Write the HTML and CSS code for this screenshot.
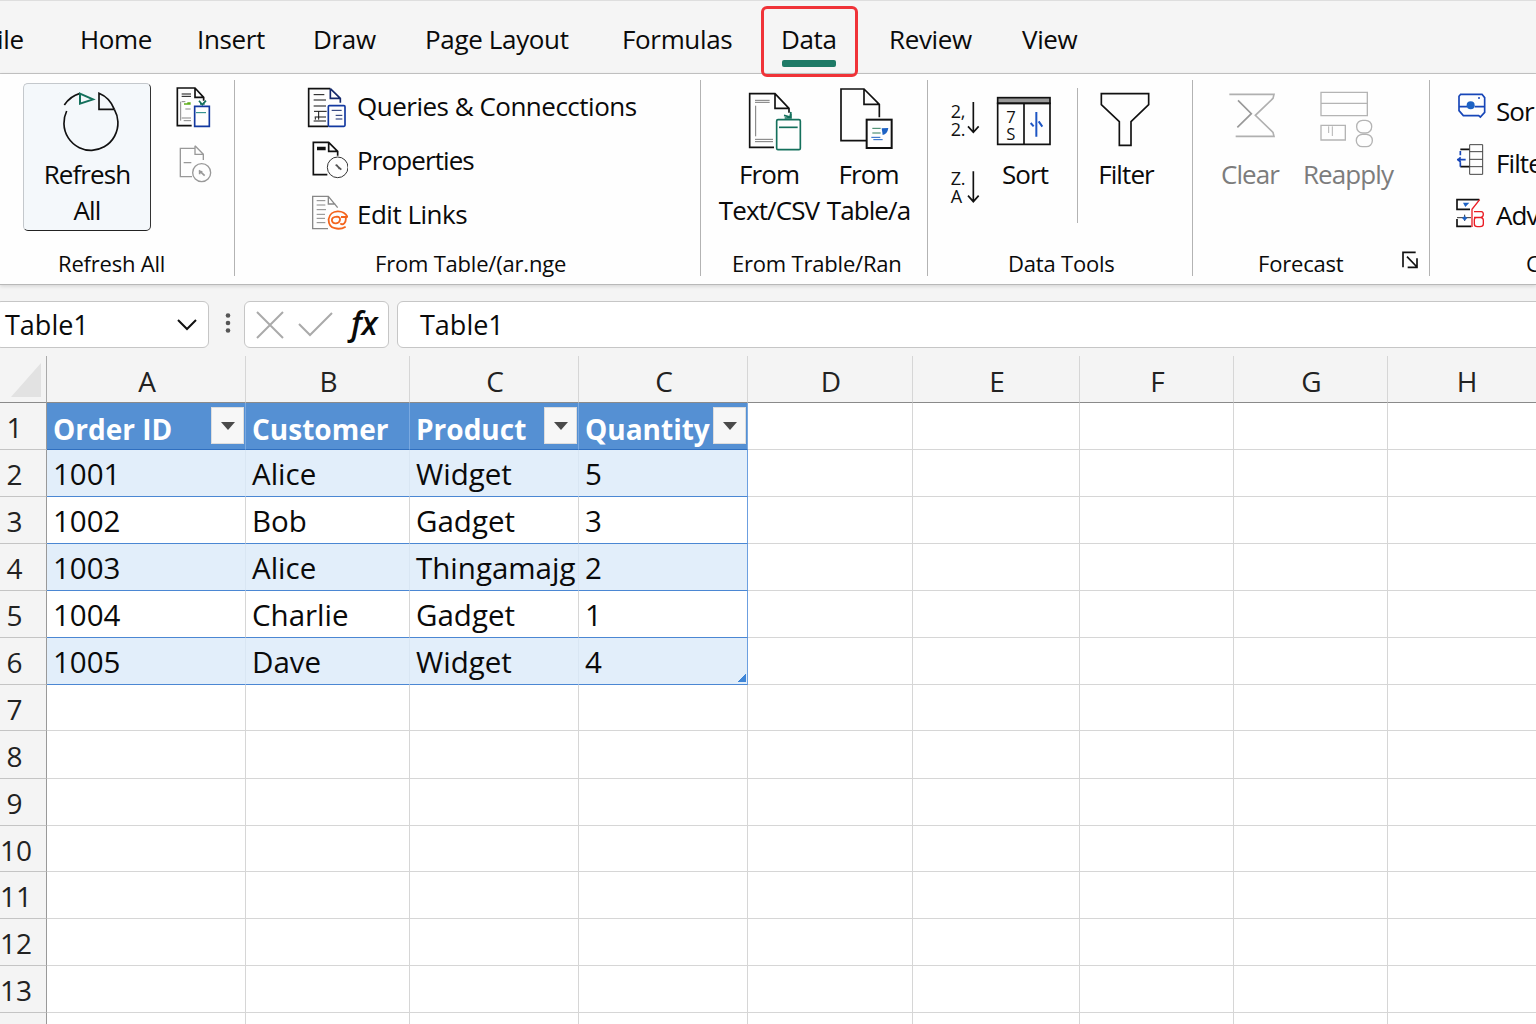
FILE: index.html
```
<!DOCTYPE html>
<html lang="en">
<head>
  <meta charset="UTF-8">
  <meta name="viewport" content="width=device-width, initial-scale=1.0">
  <title>Table1</title>
  <link rel="stylesheet" href="styles.css">
</head>
<body>
  <nav class="tabs">
    <a class="tab tab--file">File</a>
    <a class="tab">Home</a>
    <a class="tab">Insert</a>
    <a class="tab">Draw</a>
    <a class="tab">Page Layout</a>
    <a class="tab">Formulas</a>
    <a class="tab tab--active">Data</a>
    <a class="tab">Review</a>
    <a class="tab">View</a>
  </nav>

  <section class="ribbon">
    <div class="group group--refresh">
      <div class="group__body">
        <button class="big big--pressed">
          <svg class="icon" width="126" height="73" viewBox="75 45 378 219">
            <path d="M203 126A81 82 0 1 0 346 121M196 108A84 84 0 0 1 243 73"/>
            <path d="M346 121H300V73Q332 86 346 121"/>
            <path d="M243 74L282 91L243 104Z" stroke="#14705c" stroke-width="6"/>
          </svg>
          <span>Refresh</span>
          <span>All</span>
        </button>
        <svg class="icon side" width="38" height="110" viewBox="525 42 114 330">
          <path d="M575 167H532V54H585L611 82V92M585 54V82H611"/>
          <path d="M545 72H573M545 79H573" stroke-width="3"/>
          <path d="M542 95V152M545 95H556M556 117H572M545 144H573M551 152H573" stroke="#888" stroke-width="3"/>
          <path d="M552 102H572M562 99H572" stroke="#5fae1c" stroke-width="4"/>
          <path d="M597 92L607 104L618 92M600 102H614" stroke="#14705c"/>
          <path d="M584 109H628V169H584Z" fill="#fefefe" stroke="#1238a0"/>
          <path d="M588 128H618" stroke="#14807c" stroke-width="3"/>
          <g stroke="#999" stroke-width="4">
            <path d="M576 320H541V235H583M585 227V253H610V270M585 227L610 253M551 278H574"/>
            <circle cx="605" cy="308" r="27"/>
            <path d="M597 301L614 317M599 302V313M598 303L607 306" stroke-width="5"/>
          </g>
        </svg>
      </div>
      <div class="group__label">Refresh All</div>
    </div>

    <div class="group group--queries">
      <div class="list">
        <div class="row">
          <svg class="icon" width="42" height="54" viewBox="48 15 126 162">
            <path d="M115 154H56V41H121"/>
            <path d="M121 41L151 70V83M121 41V70H151" stroke="#15296b"/>
            <path d="M71 59H103M71 75H108M71 93H108M72 109H110M74 126H108M71 138H108M86 109V134M76 127V134" stroke-width="3"/>
            <rect x="115" y="92" width="50" height="62" rx="3" stroke="#1238a0"/>
            <path d="M125 106H155M137 121H157M137 132H157" stroke="#15296b" stroke-width="3"/>
          </svg>
          <span class="row__long">Queries &amp; Connecctions</span>
        </div>
        <div class="row">
          <svg class="icon" width="42" height="54" viewBox="48 177 126 162">
            <path d="M112 299H70V202H116L143 229V242M116 202V229H143M81 218H107M81 223H107"/>
            <circle cx="143" cy="277" r="31" stroke="#333" stroke-width="3"/>
            <path d="M137 269L154 284M140 270L149 282" stroke="#555"/>
          </svg>
          <span>Properties</span>
        </div>
        <div class="row">
          <svg class="icon" width="42" height="54" viewBox="48 339 126 162">
            <g stroke="#888" stroke-width="4">
              <path d="M114 461H68V364H115L143 398M115 364V387H136"/>
              <path d="M80 377H106M80 390H106M80 404H108M80 418H105M80 430H105M80 443H106" stroke-width="3"/>
            </g>
            <path d="M173 428C164 402 120 402 116 432C114 465 150 465 167 455M141 425C120 426 122 446 138 445C153 443 154 425 141 425M153 426H167C170 444 158 452 151 445" stroke="#f4641c" stroke-width="5.5"/>
          </svg>
          <span class="row__long">Edit Links</span>
        </div>
      </div>
      <div class="group__label">From Table/(ar.nge</div>
    </div>

    <div class="group group--from">
      <div class="group__body">
        <button class="big big--csv">
          <svg class="icon" width="100" height="73" viewBox="87 27 300 219">
            <path d="M252 217H179V56H255L297 100V113M255 56V100H297"/>
            <path d="M195 76H239M195 82H239M195 193H249M195 200H249M197 92V184" stroke="#777" stroke-width="3"/>
            <path d="M303 111L300 126L282 121M284 129H303V116" stroke="#14705c"/>
            <rect x="260" y="134" width="71" height="90" rx="4" stroke="#14705c" stroke-width="5"/>
            <path d="M267 157H323" stroke="#14705c"/>
          </svg>
          <span>From</span>
          <span>Text/CSV</span>
        </button>
        <button class="big big--table">
          <svg class="icon" width="83" height="73" viewBox="411 27 249 219">
            <path d="M529 197H453V42H522L568 88V127M522 42V88H568"/>
            <rect x="530" y="134" width="75" height="85" stroke-width="6"/>
            <path d="M547 160H572M547 174H572" stroke="#2f7d5c" stroke-width="3"/>
            <path d="M575 160L595 159Q592 178 578 180Z" fill="#1d62c4" stroke="none"/>
            <path d="M544 187H571M550 194H578" stroke="#1d62c4" stroke-width="3"/>
          </svg>
          <span>From</span>
          <span>Table/a</span>
        </button>
      </div>
      <div class="group__label">Erom Trable/Ran</div>
    </div>

    <div class="group group--tools">
      <div class="group__body">
        <svg class="icon sorts" width="32" height="128" viewBox="57 27 96 384">
          <g class="icon__text" font-size="54">
            <text x="62" y="129">2,</text>
            <text x="62" y="183">2.</text>
            <text x="62" y="329">Z.</text>
            <text x="62" y="384">A</text>
          </g>
          <path d="M130 81V171M114 154L130 172L146 154M130 289V379M114 362L130 380L146 362"/>
        </svg>
        <button class="big big--sort">
          <svg class="icon" width="70" height="73" viewBox="180 27 210 219">
            <rect x="203" y="68" width="157" height="17" fill="#999"/>
            <path d="M203 85H360V208H203ZM282 85V208"/>
            <g class="icon__text" font-size="50">
              <text x="229" y="145">7</text>
              <text x="229" y="195">S</text>
            </g>
            <path d="M319 111V185M302 144L311 154M326 139L337 155" stroke="#1d55c4" stroke-width="6"/>
          </svg>
          <span>Sort</span>
        </button>
        <div class="divider"></div>
        <button class="big big--filter">
          <svg class="icon" width="72" height="73" viewBox="480 27 216 219">
            <path d="M514 56H656V89L603 140V211H568V140L514 89Z"/>
          </svg>
          <span>Filter</span>
        </button>
      </div>
      <div class="group__label">Data Tools</div>
    </div>

    <div class="group group--forecast">
      <div class="group__body">
        <button class="big big--clear">
          <svg class="icon" width="62" height="73" viewBox="87 27 186 219">
            <path d="M118 58H252L249 70L196 121L249 172L252 184H137" stroke="#b0b0b0"/>
            <path d="M144 76L184 116L142 157" stroke="#999"/>
          </svg>
          <span>Clear</span>
        </button>
        <button class="big big--reapply">
          <svg class="icon" width="94" height="73" viewBox="333 27 282 219">
            <g stroke="#b4b4b4" stroke-width="4">
              <path d="M393 52H532V122H393ZM393 85H532M393 151H466V195H393Z"/>
              <path d="M416 154V174M427 154V183" stroke-width="3"/>
              <rect x="500" y="136" width="45" height="38" rx="18"/>
              <rect x="499" y="178" width="48" height="37" rx="18"/>
            </g>
          </svg>
          <span>Reapply</span>
        </button>
      </div>
      <div class="group__label">
        <span>Forecast</span>
        <svg class="icon" width="16" height="18" viewBox="637 532 48 54">
          <path d="M678 536H640V581M652 549L682 580M682 554V581H654"/>
        </svg>
      </div>
    </div>

    <div class="group group--outline">
      <div class="list">
        <div class="row">
          <svg class="icon" width="36" height="52" viewBox="792 30 108 156">
            <path d="M812 58H876L884 68V112L871 126L866 122H820L807 107V64ZM807 95H832M854 95H882" stroke="#1746b8"/>
            <circle cx="842" cy="91" r="12" fill="#1d62c4" stroke="none"/>
            <circle cx="867" cy="69" r="3" fill="#1746b8" stroke="none"/>
          </svg>
          <span>Sor</span>
        </div>
        <div class="row">
          <svg class="icon" width="36" height="52" viewBox="792 186 108 156">
            <path d="M839 209H878V298H839ZM839 230H878M839 253H878M839 275H878" stroke="#444" stroke-width="3"/>
            <path d="M838 223H811M838 275H811"/>
            <path d="M811 228V241M811 262V275M801 254H827M812 247L804 254L812 261" stroke="#1746b8"/>
          </svg>
          <span>Filte</span>
        </div>
        <div class="row">
          <svg class="icon" width="36" height="52" viewBox="792 342 108 156">
            <path d="M868 374H801V403H840M801 432V454H844"/>
            <path d="M801 428H843M824 419V438" stroke="#333" stroke-width="3"/>
            <path d="M819 383H838L826 396ZM816 429L824 423L832 429L824 437Z" fill="#1d62c4" stroke="none"/>
            <path d="M869 374L846 403V456M852 410H874Q880 411 880 418Q880 427 872 427H852M853 434Q853 428 860 428H873Q880 429 880 436V447Q880 455 870 455H862Q853 455 853 447Z" stroke="#ea1c24" stroke-width="4"/>
          </svg>
          <span>Adv</span>
        </div>
      </div>
      <div class="group__label">C</div>
    </div>
  </section>

  <section class="formula">
    <div class="formula__name">
      <span>Table1</span>
      <svg class="icon" width="20" height="12" viewBox="0 0 20 12"><path class="thin" d="M1 1L10 10L19 1"/></svg>
    </div>
    <svg class="formula__dots" width="6" height="20" viewBox="0 0 6 20">
      <circle cx="3" cy="2.5" r="2.3"/><circle cx="3" cy="10" r="2.3"/><circle cx="3" cy="17.5" r="2.3"/>
    </svg>
    <div class="formula__actions">
      <svg class="icon" width="28" height="28" viewBox="0 0 28 28"><path class="thin thin--off" d="M1 1L27 27M27 1L1 27"/></svg>
      <svg class="icon" width="35" height="25" viewBox="0 0 35 25"><path class="thin thin--off" d="M1 12L12 23L34 1"/></svg>
      <i class="formula__fx">fx</i>
    </div>
    <div class="formula__input">Table1</div>
  </section>

  <table class="sheet">
    <colgroup>
      <col class="c-head"><col class="c-a"><col class="c-b"><col class="c-c"><col class="c-c"><col class="c-d"><col class="c-e"><col class="c-f"><col class="c-f"><col class="c-h">
    </colgroup>
    <thead>
      <tr>
        <th class="corner"><svg width="30" height="34" viewBox="0 0 30 34"><path d="M30 0V34H0Z" fill="#e2e2e2"/></svg></th>
        <th>A</th><th>B</th><th>C</th><th>C</th><th>D</th><th>E</th><th>F</th><th>G</th><th>H</th>
      </tr>
    </thead>
    <tbody>
      <tr class="head">
        <th>1</th>
        <td><div class="cell">Order ID<b class="drop"></b></div></td>
        <td><div class="cell">Customer</div></td>
        <td><div class="cell">Product<b class="drop"></b></div></td>
        <td><div class="cell">Quantity<b class="drop"></b></div></td>
        <td></td><td></td><td></td><td></td><td></td>
      </tr>
      <tr class="data band"><th>2</th><td>1001</td><td>Alice</td><td>Widget</td><td>5</td><td></td><td></td><td></td><td></td><td></td></tr>
      <tr class="data"><th>3</th><td>1002</td><td>Bob</td><td>Gadget</td><td>3</td><td></td><td></td><td></td><td></td><td></td></tr>
      <tr class="data band"><th>4</th><td>1003</td><td>Alice</td><td>Thingamajg</td><td>2</td><td></td><td></td><td></td><td></td><td></td></tr>
      <tr class="data"><th>5</th><td>1004</td><td>Charlie</td><td>Gadget</td><td>1</td><td></td><td></td><td></td><td></td><td></td></tr>
      <tr class="data band last"><th>6</th><td>1005</td><td>Dave</td><td>Widget</td><td>4</td><td></td><td></td><td></td><td></td><td></td></tr>
      <tr class="short"><th>7</th><td></td><td></td><td></td><td></td><td></td><td></td><td></td><td></td><td></td></tr>
      <tr class="tall"><th>8</th><td></td><td></td><td></td><td></td><td></td><td></td><td></td><td></td><td></td></tr>
      <tr><th>9</th><td></td><td></td><td></td><td></td><td></td><td></td><td></td><td></td><td></td></tr>
      <tr class="short"><th>10</th><td></td><td></td><td></td><td></td><td></td><td></td><td></td><td></td><td></td></tr>
      <tr><th>11</th><td></td><td></td><td></td><td></td><td></td><td></td><td></td><td></td><td></td></tr>
      <tr><th>12</th><td></td><td></td><td></td><td></td><td></td><td></td><td></td><td></td><td></td></tr>
      <tr><th>13</th><td></td><td></td><td></td><td></td><td></td><td></td><td></td><td></td><td></td></tr>
      <tr><th></th><td></td><td></td><td></td><td></td><td></td><td></td><td></td><td></td><td></td></tr>
    </tbody>
  </table>
</body>
</html>
```
FILE: styles.css
```
*,
*::before,
*::after {
  box-sizing: border-box;
}
body{
  margin: 0;
  width: 1536px;
  height: 1024px;
  overflow: hidden;
  background: #f4f4f4;
  color: #0a0a0a;
  font-family: 'Open Sans', 'Noto Sans', sans-serif;
  font-size: 26px;
  white-space: nowrap;
}
button{
  margin: 0;
  padding: 0;
  border: none;
  background: none;
  font: inherit;
  color: inherit;
  letter-spacing: inherit;
}
svg{
  display: block;
  flex: none;
}
.icon{
  fill: none;
  stroke: #111;
  stroke-width: 5;
}
.icon__text{
  fill: #111;
  stroke: none;
}
.thin{
  stroke-width: 2;
}
.thin--off{
  stroke: #aaa;
}

/* tabs */
.tabs{
  display: grid;
  grid-template-columns: 80px 117px 116px 112px 197px 140px 127px 133px 200px;
  height: 74px;
  border-top: 1px solid #dedede;
  border-bottom: 1px solid #c6c6c6;
  background: #f5f5f5;
  letter-spacing: -.35px;
  line-height: 77px;
}
.tab--file{
  margin-left: -16px;
}
.tab--active{
  position: relative;
  z-index: 1;
  width: 97px;
  height: 71px;
  margin: 5px 0 0 -1px;
  padding-left: 17px;
  border: 3px solid #f03338;
  border-radius: 6px;
  line-height: 61px;
}
.tab--active::after{
  content: '';
  position: absolute;
  left: 18px;
  bottom: 7px;
  width: 54px;
  height: 7px;
  border-radius: 2px;
  background: #1e7a66;
}

/* ribbon */
.ribbon{
  display: grid;
  grid-template-columns: 235px 466px 227px 265px 237px 106px;
  height: 211px;
  border-bottom: 1px solid #b8b8b8;
  background: #fefefe;
  box-shadow: 0 1px 4px rgba(0, 0, 0, .15);
  letter-spacing: -.9px;
}
.group{
  position: relative;
  display: flex;
  flex-direction: column;
  overflow: hidden;
}
.group:not(:last-child)::after{
  content: '';
  position: absolute;
  right: 0;
  top: 6px;
  width: 1px;
  height: 196px;
  background: #b3b3b3;
}
.group__body{
  display: flex;
  align-items: flex-start;
  padding-top: 10px;
}
.group__label{
  display: flex;
  align-items: center;
  height: 42px;
  margin-top: auto;
  font-size: 22px;
  letter-spacing: -.2px;
}
.big{
  display: flex;
  flex-direction: column;
  align-items: center;
  line-height: 36px;
}
.big--pressed{
  width: 128px;
  height: 148px;
  margin: -1px 0 0 23px;
  border: 1px solid #c4c8cc;
  border-right: 1px solid #333;
  border-bottom: 1px solid #222;
  border-radius: 5px;
  background: #f4f8fb;
}
.big span{
  position: relative;
  top: -1px;
}
.side{
  margin-left: 24px;
}
.group--refresh .group__label{
  padding-left: 58px;
}
.group--queries .group__label{
  padding-left: 140px;
}
.group--from .group__body{
  padding-left: 18px;
}
.group--from .group__label{
  padding-left: 31px;
}
.big--csv{
  width: 100px;
  margin-right: 8px;
}
.big--table{
  width: 83px;
}
.group--tools .group__body{
  padding-left: 21px;
}
.group--tools .group__label{
  padding-left: 80px;
}
.big--sort{
  width: 70px;
  margin-left: 9px;
}
.divider{
  width: 1px;
  height: 135px;
  margin: 4px 12px 0 17px;
  background: #b3b3b3;
}
.big--filter{
  width: 72px;
}
.group--forecast .group__body{
  padding-left: 26px;
  color: #7c7c7c;
}
.group--forecast .group__label{
  justify-content: space-between;
  padding: 0 12px 6px 65px;
}
.group--forecast .group__label span{
  padding-top: 6px;
}
.big--clear{
  width: 62px;
  margin-right: 20px;
}
.big--reapply{
  width: 94px;
}
.list{
  padding: 6px 0 0 71px;
}
.row{
  display: flex;
  align-items: center;
  gap: 9px;
  height: 54px;
}
.row span{
  padding-bottom: 3px;
}
.row__long{
  letter-spacing: -.5px;
}
.group--outline .list{
  padding: 11px 0 0 24px;
}
.group--outline .row{
  gap: 6px;
  height: 52px;
}
.group--outline .row span{
  padding-bottom: 1px;
}
.group--outline .group__label{
  padding-left: 96px;
}

/* formula bar */
.formula{
  display: flex;
  align-items: center;
  height: 71px;
  padding-top: 8px;
  font-size: 27px;
}
.formula__name,
.formula__actions,
.formula__input{
  display: flex;
  flex: none;
  align-items: center;
  height: 47px;
  border: 1px solid #c6c6c6;
  border-radius: 6px;
  background: #fff;
}
.formula__name{
  justify-content: space-between;
  width: 214px;
  margin-left: -5px;
  padding: 0 11px 0 9px;
}
.formula__dots{
  margin: -4px 13px 0 16px;
  fill: #555;
}
.formula__actions{
  width: 145px;
  padding-left: 11px;
}
.formula__actions svg + svg{
  margin-left: 14px;
}
.formula__fx{
  margin: -4px 0 0 18px;
  font-size: 32px;
  font-weight: 600;
  letter-spacing: -.5px;
  line-height: 40px;
}
.formula__input{
  width: 1160px;
  margin-left: 8px;
  padding-left: 22px;
}

/* sheet */
.sheet{
  width: 1545px;
  table-layout: fixed;
  border-collapse: separate;
  border-spacing: 0;
  font-size: 28px;
  line-height: 38px;
}
.c-head{ width: 47px; }
.c-a{ width: 199px; }
.c-b{ width: 164px; }
.c-c{ width: 169px; }
.c-d{ width: 165px; }
.c-e{ width: 167px; }
.c-f{ width: 154px; }
.c-h{ width: 157px; }
.sheet tr{
  height: 47px;
}
.sheet .short{
  height: 46px;
}
.sheet .tall{
  height: 48px;
}
.sheet th,
.sheet td{
  padding: 4px 0 0;
  border-right: 1px solid #d6d6d6;
  border-bottom: 1px solid #d6d6d6;
  font-weight: 400;
}
.sheet td{
  padding: 2px 0 0 6px;
  background: #fff;
}
.sheet thead th{
  padding-left: 2px;
  border-bottom-color: #8a8a8a;
  color: #222;
}
.sheet tbody th{
  padding: 2px 17px 0 0;
  border-right-color: #999;
  border-bottom-color: #c4c4c4;
  color: #222;
}
.sheet thead .corner{
  padding: 2px 0 0 11px;
  border-right-color: #aaa;
}
.head td:nth-child(-n+5){
  padding-top: 4px;
  border-right-color: #7aa9e0;
  border-bottom-color: #2f6fc0;
  background: #5590d3;
  color: #fff;
  font-weight: 700;
}
.cell{
  display: flex;
  align-items: center;
  justify-content: space-between;
  height: 42px;
  padding-top: 2px;
}
.drop{
  width: 33px;
  height: 37px;
  margin: -7px 1px 0 -10px;
  border: 1px solid #ddd;
  background: #f7f7f7;
  flex: none;
}
.drop::before{
  content: '';
  display: block;
  margin: 14px auto 0;
  width: 0;
  border: 7px solid transparent;
  border-top: 8px solid #4a4a4a;
  border-bottom: 0;
}
.data td:nth-child(-n+5){
  border-bottom-color: #4b87d3;
  font-size: 29.5px;
}
.data td:nth-child(5){
  border-right-color: #6c9fe0;
}
.data.band td:nth-child(-n+5){
  background-color: #e2eefa;
}
.data.band td:nth-child(-n+4){
  border-right-color: #d9e6f3;
}
.data.last td:nth-child(5){
  background-image: linear-gradient(135deg, transparent 50%, #3f86d8 50%);
  background-repeat: no-repeat;
  background-size: 9px 9px;
  background-position: right 1px bottom 2px;
}
```
